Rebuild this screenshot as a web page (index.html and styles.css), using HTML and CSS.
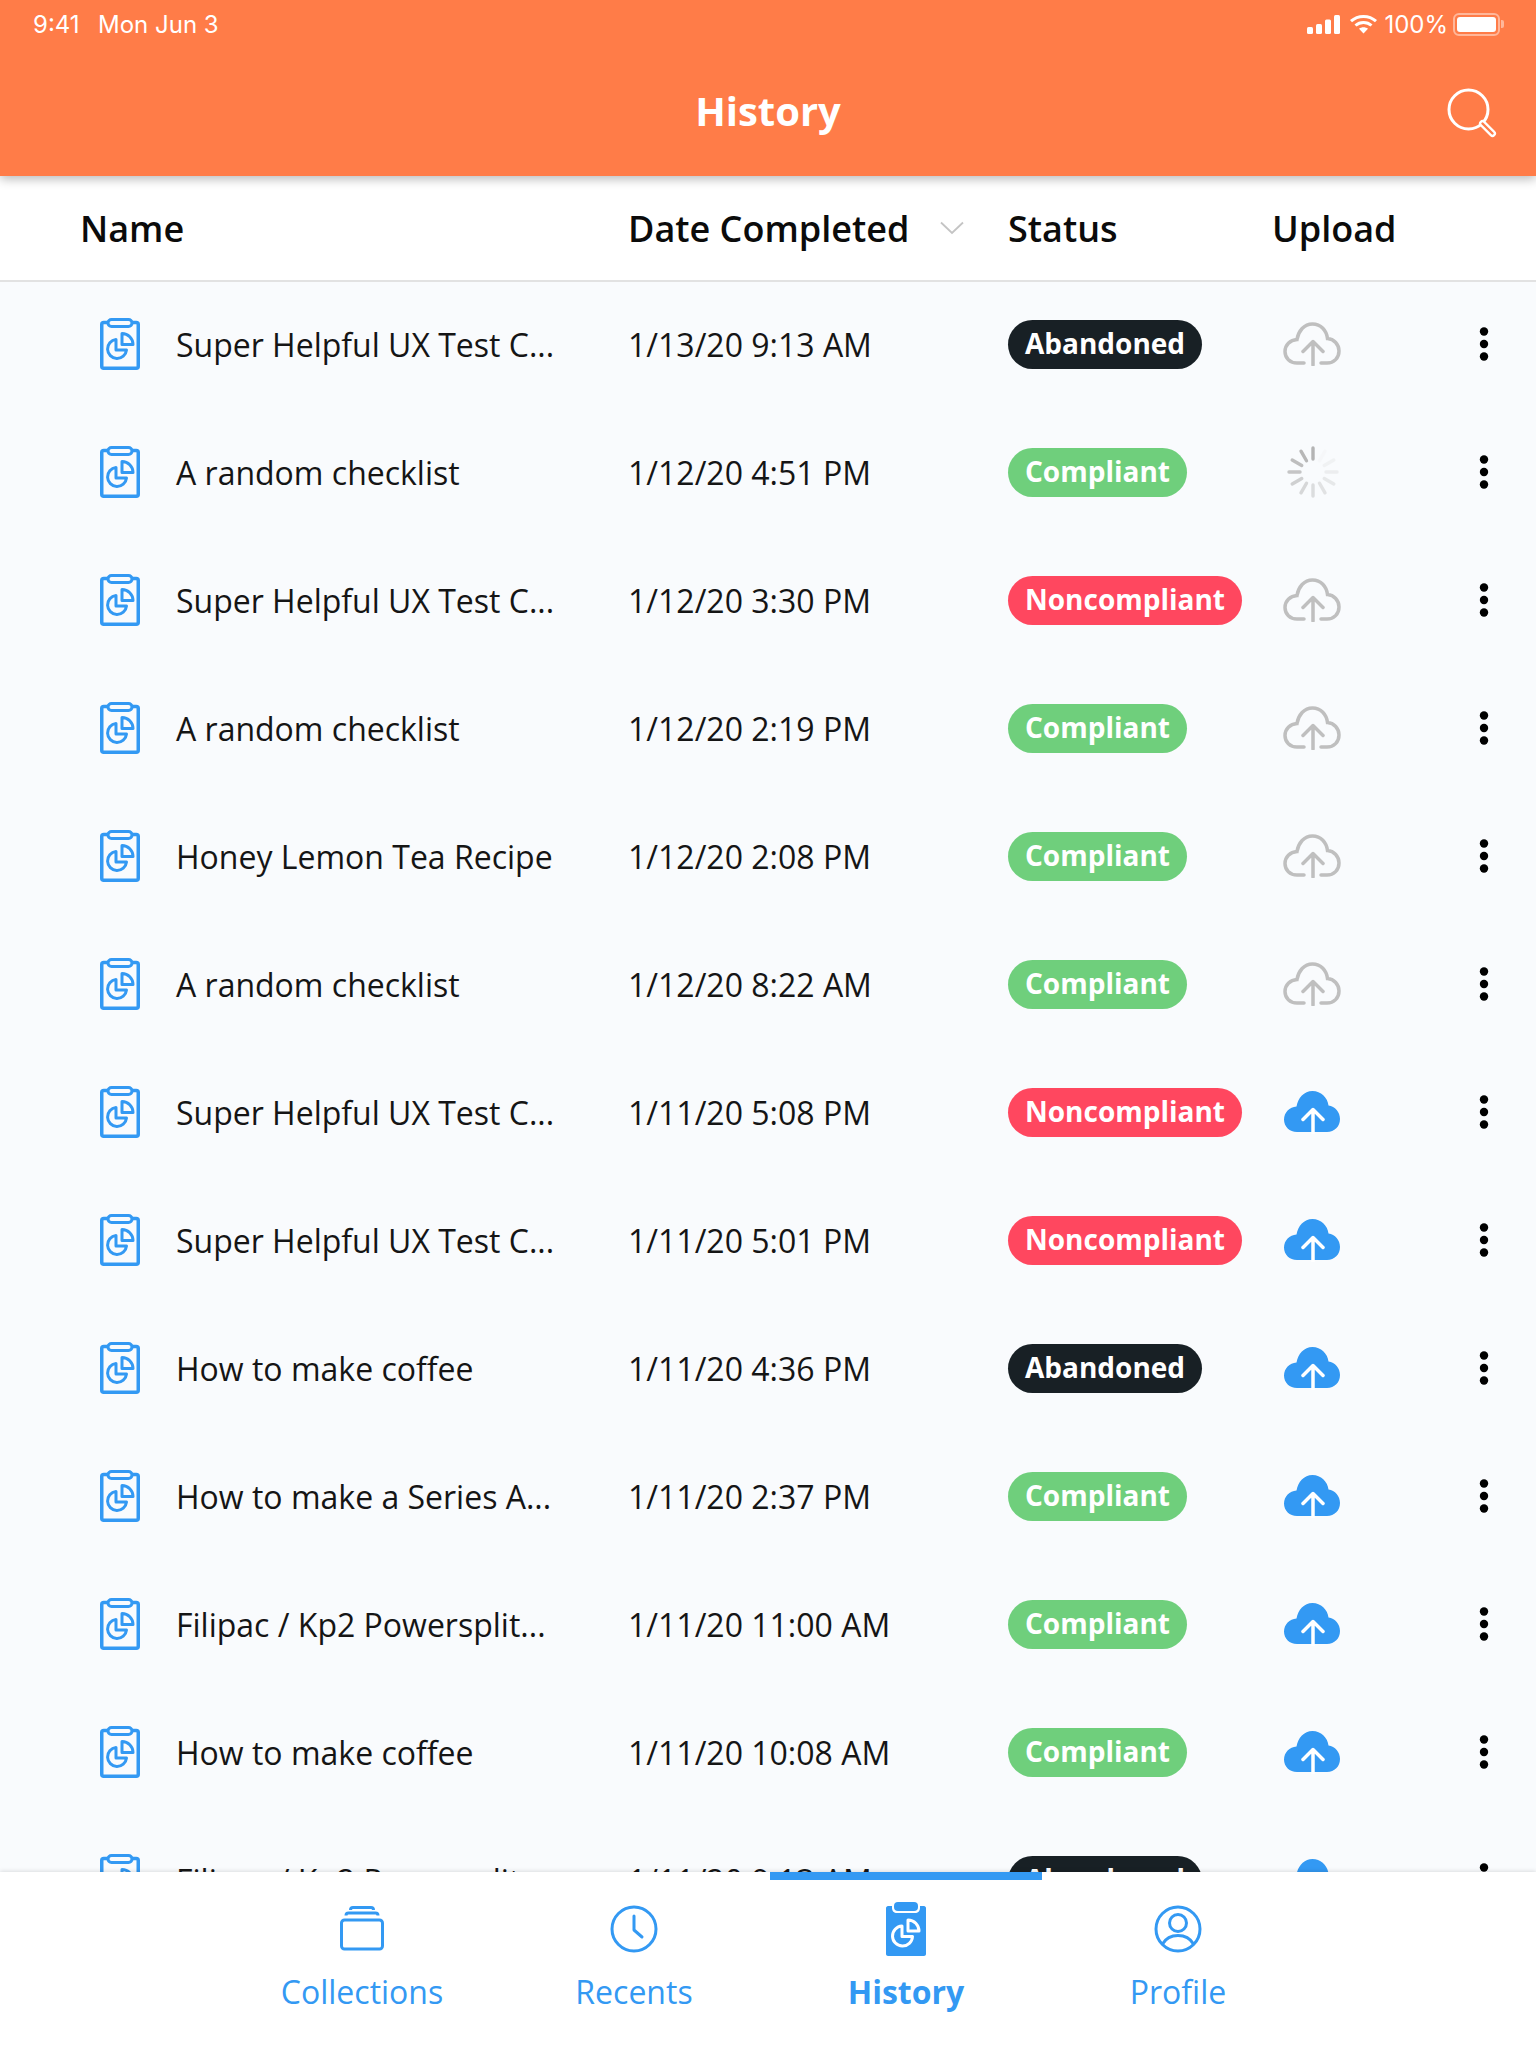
FILE: index.html
```html
<!DOCTYPE html>
<html lang="en">
<head>
<meta charset="utf-8">
<title>History</title>
<link rel="stylesheet" href="styles.css">
</head>
<body>
<svg class="defs" width="0" height="0" aria-hidden="true">
  <symbol id="clip" viewBox="0 0 40 52">
    <rect x="1.75" y="4.5" width="36.5" height="45.75" rx="2" fill="none" stroke="currentColor" stroke-width="3.5"/>
    <rect x="8" y="1.5" width="24" height="7" rx="3.5" fill="#f9fbfd" stroke="currentColor" stroke-width="3"/>
    <path d="M16 21.5A9.5 9.5 0 1 0 26.5 32H16Z" fill="none" stroke="currentColor" stroke-width="3" stroke-linejoin="round"/>
    <path d="M22 15.5A11 11 0 0 1 33 26.5H22Z" fill="none" stroke="currentColor" stroke-width="3" stroke-linejoin="round"/>
  </symbol>
  <symbol id="cloud" viewBox="0 0 58 44">
    <path d="M21 41H14C7 41 2 36 2 29.5C2 23 7 18 14 17.500C15.500 9 21 2 29.500 2C38 2 43.500 8.500 44.500 16.500C51 17 56 22.500 56 29C56 36 51 41 44 41H38" fill="none" stroke="#bfbfbf" stroke-width="3.500" stroke-linecap="round"/>
    <path d="M30 43V20M20 29.500L30 19.500L40 29.500" fill="none" stroke="#bfbfbf" stroke-width="3.500" stroke-linecap="round" stroke-linejoin="round"/>
  </symbol>
  <symbol id="cloudfill" viewBox="0 0 58 44">
    <path d="M14 42C6.500 42 1 36.500 1 29.500C1 22.500 6.500 17 13.500 16.500C15 8 21 1 29.500 1C38 1 44.500 7.500 45.500 15.500C52 16.500 57 22 57 29C57 36.500 51.500 42 44 42Z" fill="#3399f3"/>
    <path d="M30 44V20M20 29.500L30 19.500L40 29.500" fill="none" stroke="#fff" stroke-width="3.500" stroke-linecap="round" stroke-linejoin="round"/>
  </symbol>
  <symbol id="spin" viewBox="0 0 52 52">
    <g stroke="#b4b4b4" stroke-width="3.400" stroke-linecap="round">
      <path d="M26 2V13"/>
      <path d="M26 2V13" opacity=".04" transform="rotate(30 26 26)"/>
      <path d="M26 2V13" opacity=".12" transform="rotate(60 26 26)"/>
      <path d="M26 2V13" opacity=".18" transform="rotate(90 26 26)"/>
      <path d="M26 2V13" opacity=".26" transform="rotate(120 26 26)"/>
      <path d="M26 2V13" opacity=".34" transform="rotate(150 26 26)"/>
      <path d="M26 2V13" opacity=".42" transform="rotate(180 26 26)"/>
      <path d="M26 2V13" opacity=".5" transform="rotate(210 26 26)"/>
      <path d="M26 2V13" opacity=".6" transform="rotate(240 26 26)"/>
      <path d="M26 2V13" opacity=".75" transform="rotate(270 26 26)"/>
      <path d="M26 2V13" opacity=".85" transform="rotate(300 26 26)"/>
      <path d="M26 2V13" opacity=".95" transform="rotate(330 26 26)"/>
    </g>
  </symbol>
  <symbol id="dots" viewBox="0 0 10 34">
    <circle cx="5" cy="4.500" r="4.200"/><circle cx="5" cy="17" r="4.200"/><circle cx="5" cy="29.500" r="4.200"/>
  </symbol>
</svg>
<div class="app">
  <header class="topbar">
    <div class="status">
      <span class="status-time">9:41</span>
      <span class="status-date">Mon Jun 3</span>
      <span class="status-right">
        <svg class="sig" width="34" height="19" viewBox="0 0 34 19"><rect x="0" y="12" width="6" height="7" rx="1.500"/><rect x="9" y="9" width="6" height="10" rx="1.500"/><rect x="18" y="4.500" width="6" height="14.500" rx="1.500"/><rect x="27" y="0" width="6" height="19" rx="1.500"/></svg>
        <svg class="wifi" width="29" height="20" viewBox="0 0 29 20"><path d="M2 7.200C9 .8 20 .8 27 7.200M6.500 11.500C11 7.500 18 7.500 22.500 11.500" fill="none" stroke="#fff" stroke-width="3"/><path d="M10 14.800C12.500 12.800 16.500 12.800 19 14.800L14.500 19.500Z" fill="#fff"/></svg>
        <span class="pct">100%</span>
        <span class="batt"><span class="batt-fill"></span></span>
        <span class="nub"></span>
      </span>
    </div>
    <div class="titlebar">
      <h1 class="title">History</h1>
      <svg class="search" width="50" height="50" viewBox="0 0 50 50"><circle cx="21.500" cy="21.500" r="19.500" fill="none" stroke="#fff" stroke-width="3"/><path d="M35.500 35.500L45.500 45.500" stroke="#fff" stroke-width="7" stroke-linecap="round"/><path d="M35.500 35.500L45.500 45.500" stroke="#ff7c48" stroke-width="2.400" stroke-linecap="round"/></svg>
    </div>
  </header>

  <div class="thead">
    <span>Name</span>
    <span class="th-date">Date Completed
      <svg class="chev" width="24" height="14" viewBox="0 0 24 14"><path d="M1 1.500L12 12L23 1.500" fill="none" stroke="#c4c4c4" stroke-width="1.800"/></svg>
    </span>
    <span>Status</span>
    <span>Upload</span>
  </div>

  <main class="list">
    <div class="row"><svg class="ic-clip"><use href="#clip"/></svg><span class="name">Super Helpful UX Test C...</span><span class="date">1/13/20 9:13 AM</span><span class="stat"><b class="badge dark">Abandoned</b></span><svg class="ic-cloud"><use href="#cloud"/></svg><svg class="ic-dots"><use href="#dots"/></svg></div>
    <div class="row"><svg class="ic-clip"><use href="#clip"/></svg><span class="name">A random checklist</span><span class="date">1/12/20 4:51 PM</span><span class="stat"><b class="badge green">Compliant</b></span><svg class="ic-spin"><use href="#spin"/></svg><svg class="ic-dots"><use href="#dots"/></svg></div>
    <div class="row"><svg class="ic-clip"><use href="#clip"/></svg><span class="name">Super Helpful UX Test C...</span><span class="date">1/12/20 3:30 PM</span><span class="stat"><b class="badge red">Noncompliant</b></span><svg class="ic-cloud"><use href="#cloud"/></svg><svg class="ic-dots"><use href="#dots"/></svg></div>
    <div class="row"><svg class="ic-clip"><use href="#clip"/></svg><span class="name">A random checklist</span><span class="date">1/12/20 2:19 PM</span><span class="stat"><b class="badge green">Compliant</b></span><svg class="ic-cloud"><use href="#cloud"/></svg><svg class="ic-dots"><use href="#dots"/></svg></div>
    <div class="row"><svg class="ic-clip"><use href="#clip"/></svg><span class="name">Honey Lemon Tea Recipe</span><span class="date">1/12/20 2:08 PM</span><span class="stat"><b class="badge green">Compliant</b></span><svg class="ic-cloud"><use href="#cloud"/></svg><svg class="ic-dots"><use href="#dots"/></svg></div>
    <div class="row"><svg class="ic-clip"><use href="#clip"/></svg><span class="name">A random checklist</span><span class="date">1/12/20 8:22 AM</span><span class="stat"><b class="badge green">Compliant</b></span><svg class="ic-cloud"><use href="#cloud"/></svg><svg class="ic-dots"><use href="#dots"/></svg></div>
    <div class="row"><svg class="ic-clip"><use href="#clip"/></svg><span class="name">Super Helpful UX Test C...</span><span class="date">1/11/20 5:08 PM</span><span class="stat"><b class="badge red">Noncompliant</b></span><svg class="ic-cloud"><use href="#cloudfill"/></svg><svg class="ic-dots"><use href="#dots"/></svg></div>
    <div class="row"><svg class="ic-clip"><use href="#clip"/></svg><span class="name">Super Helpful UX Test C...</span><span class="date">1/11/20 5:01 PM</span><span class="stat"><b class="badge red">Noncompliant</b></span><svg class="ic-cloud"><use href="#cloudfill"/></svg><svg class="ic-dots"><use href="#dots"/></svg></div>
    <div class="row"><svg class="ic-clip"><use href="#clip"/></svg><span class="name">How to make coffee</span><span class="date">1/11/20 4:36 PM</span><span class="stat"><b class="badge dark">Abandoned</b></span><svg class="ic-cloud"><use href="#cloudfill"/></svg><svg class="ic-dots"><use href="#dots"/></svg></div>
    <div class="row"><svg class="ic-clip"><use href="#clip"/></svg><span class="name">How to make a Series A...</span><span class="date">1/11/20 2:37 PM</span><span class="stat"><b class="badge green">Compliant</b></span><svg class="ic-cloud"><use href="#cloudfill"/></svg><svg class="ic-dots"><use href="#dots"/></svg></div>
    <div class="row"><svg class="ic-clip"><use href="#clip"/></svg><span class="name">Filipac / Kp2 Powersplit...</span><span class="date">1/11/20 11:00 AM</span><span class="stat"><b class="badge green">Compliant</b></span><svg class="ic-cloud"><use href="#cloudfill"/></svg><svg class="ic-dots"><use href="#dots"/></svg></div>
    <div class="row"><svg class="ic-clip"><use href="#clip"/></svg><span class="name">How to make coffee</span><span class="date">1/11/20 10:08 AM</span><span class="stat"><b class="badge green">Compliant</b></span><svg class="ic-cloud"><use href="#cloudfill"/></svg><svg class="ic-dots"><use href="#dots"/></svg></div>
    <div class="row"><svg class="ic-clip"><use href="#clip"/></svg><span class="name">Filipac / Kp2 Powersplit...</span><span class="date">1/11/20 9:13 AM</span><span class="stat"><b class="badge dark">Abandoned</b></span><svg class="ic-cloud"><use href="#cloudfill"/></svg><svg class="ic-dots"><use href="#dots"/></svg></div>
  </main>

  <nav class="tabs">
    <span class="indicator"></span>
    <div class="tab">
      <svg class="tab-ic" width="48" height="48" viewBox="0 0 48 48" fill="none" stroke="currentColor" stroke-width="3"><rect x="3.500" y="15" width="41" height="29" rx="3"/><path d="M8 10.500C8 9 9 8 10.500 8H37.500C39 8 40 9 40 10.500M12.500 5C12.500 3.500 13.500 2.500 15 2.500H33C34.500 2.500 35.500 3.500 35.500 5"/></svg>
      <span>Collections</span>
    </div>
    <div class="tab">
      <svg class="tab-ic" width="48" height="48" viewBox="0 0 48 48" fill="none" stroke="currentColor" stroke-width="3"><circle cx="24" cy="24" r="22"/><path d="M24 11V25L32 32" stroke-linecap="round" stroke-linejoin="round"/></svg>
      <span>Recents</span>
    </div>
    <div class="tab tab-on">
      <svg class="tab-ic" width="40" height="54" viewBox="0 0 40 54"><path d="M2 4H6V6C6 9 8 11 11 11H29C32 11 34 9 34 6V4H38C39 4 40 5 40 6V52C40 53 39 54 38 54H2C1 54 0 53 0 52V6C0 5 1 4 2 4Z" fill="currentColor"/><rect x="8" y="0" width="24" height="9" rx="4" fill="currentColor"/><path d="M16 24A10 10 0 1 0 26.500 34.500H16Z" fill="none" stroke="#fff" stroke-width="3" stroke-linejoin="round"/><path d="M22 18A11 11 0 0 1 33 29H22Z" fill="none" stroke="#fff" stroke-width="3" stroke-linejoin="round"/></svg>
      <span>History</span>
    </div>
    <div class="tab">
      <svg class="tab-ic" width="48" height="48" viewBox="0 0 48 48" fill="none" stroke="currentColor" stroke-width="3"><circle cx="24" cy="24" r="22"/><circle cx="24" cy="18" r="8.500"/><path d="M8.500 39C12 33 18 30.500 24 30.500C30 30.500 36 33 39.500 39"/></svg>
      <span>Profile</span>
    </div>
  </nav>
</div>
</body>
</html>
```

FILE: styles.css
```css
* { box-sizing: border-box; }
html, body { margin: 0; padding: 0; }
body { background: #fff; font-family: "Open Sans", "Noto Sans", sans-serif; color: #111; }
.defs { position: absolute; }
.app { width: 1536px; height: 2048px; display: flex; flex-direction: column; overflow: hidden; }

.topbar { height: 176px; background: #ff7c48; color: #fff; box-shadow: 0 3px 10px rgba(0,0,0,.28); position: relative; z-index: 2; flex: none; }
.status { height: 48px; display: flex; align-items: center; padding: 0 32px 0 33px; font-family: Inter, Roboto, sans-serif; font-size: 24px; color: #fff; }
.status-time { width: 65px; }
.status-right { margin-left: auto; display: flex; align-items: center; }
.sig { fill: #fff; margin-right: 8px; }
.wifi { margin-right: 6px; }
.pct { margin-right: 5px; }
.batt { width: 47px; height: 23px; border: 2px solid rgba(255,255,255,.45); border-radius: 6px; padding: 2px; display: block; }
.batt-fill { display: block; height: 100%; background: #fff; border-radius: 3px; }
.nub { width: 3px; height: 8px; background: rgba(255,255,255,.45); border-radius: 0 2px 2px 0; margin-left: 1px; }
.titlebar { height: 128px; position: relative; display: flex; align-items: center; justify-content: center; }
.title { margin: 0; font-size: 40px; font-weight: 700; line-height: 72px; position: relative; top: -1px; }
.search { position: absolute; right: 39px; top: 40px; }

.thead { height: 106px; flex: none; background: #fff; border-bottom: 2px solid #e2e2e2; display: grid; grid-template-columns: 547px 381px 264px auto; align-items: center; padding-left: 80px; font-size: 36px; font-weight: 600; color: #0b0b0b; }
.thead > span:nth-child(2) { margin-left: 1px; }
.th-date { display: flex; align-items: center; }
.chev { margin-left: 31px; }

.list { flex: 1; min-height: 0; overflow: hidden; background: #f9fbfd; }
.row { height: 128px; display: grid; grid-template-columns: 76px 452px 380px 275px 196px 10px; align-items: center; padding: 0 0 4px 100px; font-size: 32px; color: #151515; }
.ic-clip { width: 40px; height: 52px; color: #3399f3; }
.ic-cloud { width: 58px; height: 44px; }
.ic-spin { width: 52px; height: 52px; margin-left: 4px; }
.ic-dots { width: 10px; height: 34px; fill: #000; }
.stat { padding-top: 1px; }
.badge { display: inline-block; height: 49px; line-height: 47px; padding: 0 17px; border-radius: 25px; font-size: 28px; font-weight: 700; color: #fff; }
.dark { background: #182025; }
.green { background: #6fcf7c; }
.red { background: #ff475f; }

.tabs { height: 176px; flex: none; background: #fff; position: relative; z-index: 2; display: flex; justify-content: center; padding-left: 4px; color: #3399f3; box-shadow: 0 -1px 4px rgba(0,0,0,.12); }
.indicator { position: absolute; left: 770px; top: 0; width: 272px; height: 8px; background: #3399f3; }
.tab { width: 272px; display: flex; flex-direction: column; align-items: center; font-size: 32px; }
.tab-ic { height: 54px; margin-top: 30px; margin-bottom: 14px; }
.tab-on { font-weight: 700; }
```
